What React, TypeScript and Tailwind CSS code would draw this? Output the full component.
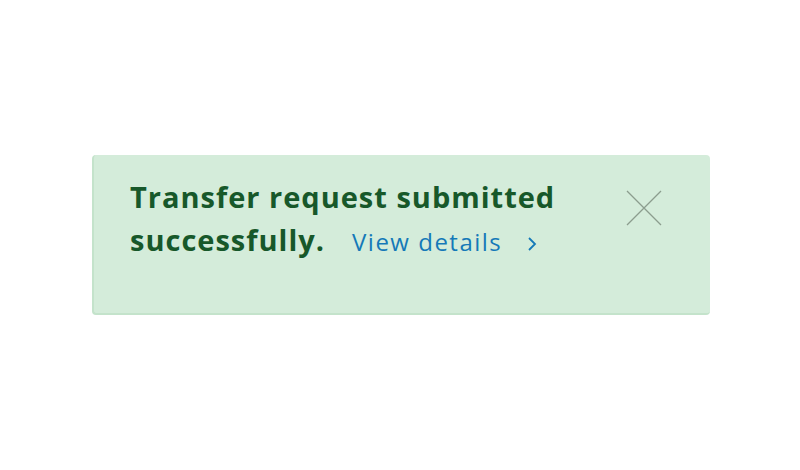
import React from "react";

export default function App() {
  return (
    <div className="w-[800px] h-[470px] bg-white flex items-start pt-[155px] pl-[92px]" style={{ fontFamily: "'Open Sans', 'Noto Sans', sans-serif" }}>
      <div className="w-[618px] h-[160px] bg-[#d4ecda] rounded-[4px] border-b-2 border-l-2 border-[#c4e3cb] flex items-start pl-[36px] pt-[20px] pr-[48px]">
        <p className="flex-1 text-[29px] leading-[43px] font-bold tracking-[1px] text-[#17582a] pr-[20px]">
          <span>Transfer request submitted successfully.</span>
          <a className="inline-block ml-[27px] text-[24px] leading-[28px] font-normal tracking-[1.5px] text-[#1479b8]">
            View details
            <svg className="inline-block ml-[25px] align-[-1px]" width="10" height="16" viewBox="0 0 10 16" fill="none" stroke="#1479b8" strokeWidth="1.8">
              <path d="M2 2 L8 8 L2 14" />
            </svg>
          </a>
        </p>
        <button className="mt-[15px] w-[36px] h-[36px] shrink-0">
          <svg width="36" height="36" viewBox="0 0 36 36" stroke="#8b9d8e" strokeWidth="1.3">
            <path d="M1 1 L35 35 M35 1 L1 35" />
          </svg>
        </button>
      </div>
    </div>
  );
}
